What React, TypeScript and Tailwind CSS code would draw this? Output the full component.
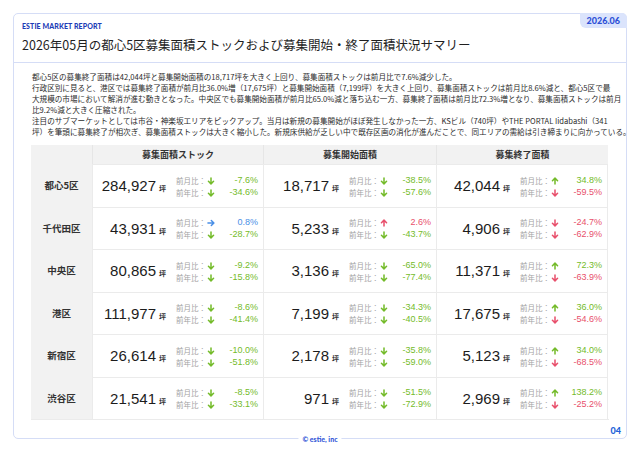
import type { ReactNode } from "react";

type Kind = "stock" | "start" | "end";
type Metric = { value: string; mom: number; yoy: number };
type Row = { area: string; stock: Metric; start: Metric; end: Metric };

const COLUMNS: { key: Kind; label: string }[] = [
  { key: "stock", label: "募集面積ストック" },
  { key: "start", label: "募集開始面積" },
  { key: "end", label: "募集終了面積" },
];

const ROWS: Row[] = [
  {
    area: "都心5区",
    stock: { value: "284,927", mom: -7.6, yoy: -34.6 },
    start: { value: "18,717", mom: -38.5, yoy: -57.6 },
    end: { value: "42,044", mom: 34.8, yoy: -59.5 },
  },
  {
    area: "千代田区",
    stock: { value: "43,931", mom: 0.8, yoy: -28.7 },
    start: { value: "5,233", mom: 2.6, yoy: -43.7 },
    end: { value: "4,906", mom: -24.7, yoy: -62.9 },
  },
  {
    area: "中央区",
    stock: { value: "80,865", mom: -9.2, yoy: -15.8 },
    start: { value: "3,136", mom: -65.0, yoy: -77.4 },
    end: { value: "11,371", mom: 72.3, yoy: -63.9 },
  },
  {
    area: "港区",
    stock: { value: "111,977", mom: -8.6, yoy: -41.4 },
    start: { value: "7,199", mom: -34.3, yoy: -40.5 },
    end: { value: "17,675", mom: 36.0, yoy: -54.6 },
  },
  {
    area: "新宿区",
    stock: { value: "26,614", mom: -10.0, yoy: -51.8 },
    start: { value: "2,178", mom: -35.8, yoy: -59.0 },
    end: { value: "5,123", mom: 34.0, yoy: -68.5 },
  },
  {
    area: "渋谷区",
    stock: { value: "21,541", mom: -8.5, yoy: -33.1 },
    start: { value: "971", mom: -51.5, yoy: -72.9 },
    end: { value: "2,969", mom: 138.2, yoy: -25.2 },
  },
];

const TONE = {
  good: "text-[#74bb2a]",
  bad: "text-[#e8506c]",
  flat: "text-[#4a8fe6]",
};

function Arrow({ dir }: { dir: "up" | "down" | "flat" }) {
  const d =
    dir === "down"
      ? "M5 1.2v7.2M1.8 5.4L5 8.6l3.2-3.2"
      : dir === "up"
        ? "M5 8.8V1.6M1.8 4.6L5 1.4l3.2 3.2"
        : "M1.2 5h7.2M5.4 1.8L8.6 5 5.4 8.2";
  return (
    <svg viewBox="0 0 10 10" className="w-[8px] h-[8px]" fill="none">
      <path d={d} stroke="currentColor" strokeWidth={1.9} strokeLinecap="round" strokeLinejoin="round" />
    </svg>
  );
}

function Change({ label, v, kind }: { label: string; v: number; kind: Kind }) {
  const dir = Math.abs(v) < 1 ? "flat" : v > 0 ? "up" : "down";
  const good = kind === "end" ? v > 0 : v < 0;
  const tone = dir === "flat" ? TONE.flat : good ? TONE.good : TONE.bad;
  return (
    <div className="grid grid-cols-[31px_8px_1fr] items-center h-[12px]">
      <span className="text-[7.5px] text-[#a3a3a3] font-['Noto_Sans_CJK_JP',sans-serif]">{label}</span>
      <span className={tone}>
        <Arrow dir={dir} />
      </span>
      <span className={`text-right text-[9px] font-['Liberation_Sans',sans-serif] ${tone}`}>
        {v.toFixed(1)}%
      </span>
    </div>
  );
}

function Cell({ m, kind, last }: { m: Metric; kind: Kind; last?: boolean }) {
  return (
    <div
      className={`flex items-center justify-end gap-[10px] pr-[5px] bg-white border-l border-t border-[#ebebeb] ${last ? "border-r" : ""}`}
    >
      <div className="flex items-baseline gap-[3px]">
        <span className="text-[15px] leading-none text-[#1c1c1c] font-['Liberation_Sans',sans-serif]">
          {m.value}
        </span>
        <span className="text-[7px] font-bold text-[#333] font-['Noto_Sans_CJK_JP',sans-serif]">坪</span>
      </div>
      <div className="w-[82px]">
        <Change label="前月比：" v={m.mom} kind={kind} />
        <Change label="前年比：" v={m.yoy} kind={kind} />
      </div>
    </div>
  );
}

function HeadCell({ children }: { children?: ReactNode }) {
  return (
    <div className="flex items-center justify-center bg-[#f2f2f2] text-[9px] font-bold text-[#333] border-l border-[#e6e6e6] first:border-l-0">
      {children}
    </div>
  );
}

export default function App() {
  return (
    <div className="w-[640px] h-[451px] bg-white overflow-hidden pt-[13px] px-[13px] font-['Noto_Sans_CJK_JP',sans-serif]">
      <div className="relative h-[426px] border border-[#d5ddf6] rounded-[5px]">
        {/* 月バッジ */}
        <div className="absolute -top-px -right-px h-[15px] px-[7px] flex items-center bg-[#dbe4fc] rounded-tr-[5px] rounded-bl-[6px] text-[9px] font-black text-[#2d50d6] font-['Lato',sans-serif]">
          2026.06
        </div>

        <header className="px-[8px] pt-[8px] pb-[8px] border-b border-[#d5ddf6]">
          <p className="text-[7px] leading-[9px] font-black tracking-[0.1px] text-[#1d3cb6] font-['Lato',sans-serif]">
            ESTIE MARKET REPORT
          </p>
          <h1 className="mt-[5px] text-[12.5px] leading-[18px] font-normal text-[#1f1f1f]">
            2026年05月の都心5区募集面積ストックおよび募集開始・終了面積状況サマリー
          </h1>
        </header>

        <main className="px-[17px] pt-[8px]">
          <div className="ml-px text-[7.6px] leading-[11px] text-[#2b2b2b] whitespace-nowrap">
            <p>
              都心5区の募集終了面積は42,044坪と募集開始面積の18,717坪を大きく上回り、募集面積ストックは前月比で7.6%減少した。
              <br />
              行政区別に見ると、港区では募集終了面積が前月比36.0%増（17,675坪）と募集開始面積（7,199坪）を大きく上回り、募集面積ストックは前月比8.6%減と、都心5区で最
              <br />
              大規模の市場において解消が進む動きとなった。中央区でも募集開始面積が前月比65.0%減と落ち込む一方、募集終了面積は前月比72.3%増となり、募集面積ストックは前月
              <br />
              比9.2%減と大きく圧縮された。
            </p>
            <p>
              注目のサブマーケットとしては市谷・神楽坂エリアをピックアップ。当月は新規の募集開始がほぼ発生しなかった一方、KSビル（740坪）やTHE PORTAL Iidabashi（341
              <br />
              坪）を筆頭に募集終了が相次ぎ、募集面積ストックは大きく縮小した。新規床供給が乏しい中で既存区画の消化が進んだことで、同エリアの需給は引き締まりに向かっている。
            </p>
          </div>

          <div className="mt-[8px] grid grid-cols-[61px_171px_173px_172px] grid-rows-[19px_repeat(6,42.5px)] border-b border-[#ebebeb]">
            <HeadCell />
            {COLUMNS.map((c) => (
              <HeadCell key={c.key}>{c.label}</HeadCell>
            ))}
            {ROWS.map((r) => (
              <div key={r.area} className="contents">
                <div className="flex items-center justify-center bg-[#f2f2f2] text-[9.5px] font-bold text-[#333]">
                  {r.area}
                </div>
                <Cell m={r.stock} kind="stock" />
                <Cell m={r.start} kind="start" />
                <Cell m={r.end} kind="end" last />
              </div>
            ))}
          </div>

          <div className="flex justify-end -mr-[12px] mt-[5px]">
            <span className="text-[9px] leading-[11px] font-black text-[#2362d8] font-['Lato',sans-serif]">04</span>
          </div>
        </main>

        <div className="absolute left-1/2 -translate-x-1/2 -bottom-[6px] bg-white px-[4px] text-[7px] leading-[10px] font-black text-[#3256d8] font-['Lato',sans-serif]">
          © estie, inc
        </div>
      </div>
    </div>
  );
}
